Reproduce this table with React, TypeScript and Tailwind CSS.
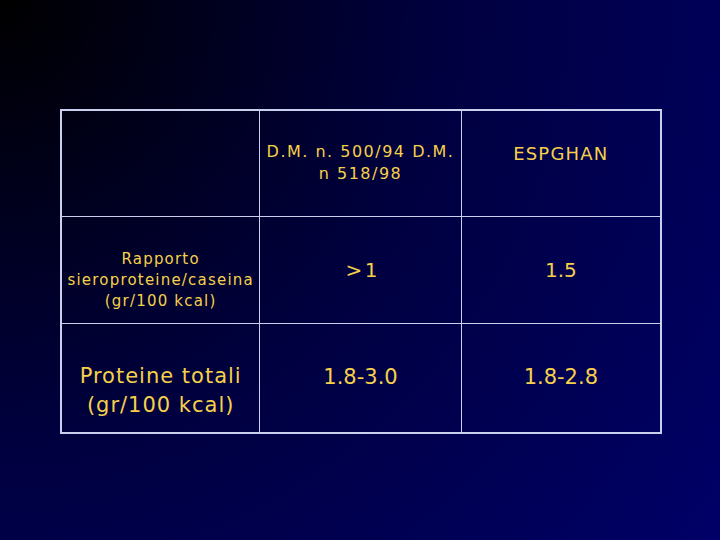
const font = { fontFamily: '"Comic Sans MS", "DejaVu Sans", "Noto Sans", sans-serif' };

const rows = [
  {
    h: "h-[106px]",
    cells: [
      { lines: [], cls: "" },
      { lines: ["D.M. n. 500/94 D.M.", "n 518/98"], cls: "text-[16px] leading-[22px] tracking-[1.5px] -mt-[2px]" },
      { lines: ["ESPGHAN"], cls: "text-[18px] leading-[22px] tracking-[1.2px] -mt-5" },
    ],
  },
  {
    h: "h-[107px]",
    cells: [
      { lines: ["Rapporto", "sieroproteine/caseina", "(gr/100 kcal)"], cls: "text-[15px] leading-[21px] tracking-[1.2px] mt-5" },
      { lines: ["> 1"], cls: "text-[20px] leading-[26px] tracking-[-2px]" },
      { lines: ["1.5"], cls: "text-[20px] leading-[26px]" },
    ],
  },
  {
    h: "h-[108px]",
    cells: [
      { lines: ["Proteine totali", "(gr/100 kcal)"], cls: "text-[21px] leading-[29px] tracking-[1px] mt-[26px]" },
      { lines: ["1.8-3.0"], cls: "text-[21px] leading-[26px] -mt-[2px]" },
      { lines: ["1.8-2.8"], cls: "text-[21px] leading-[26px] -mt-[2px]" },
    ],
  },
];

const widths = ["w-[199px]", "w-[202px]", "w-[199px]"];

export default function App() {
  return (
    <div
      className="w-[720px] h-[540px] overflow-hidden pt-[109px] pl-[60px] bg-[radial-gradient(circle_at_0_0,#000000_0px,#000040_450px,#000066_880px)]"
      style={font}
    >
      <div className="w-[602px] border-2 border-[#c9d0ee] flex flex-col">
        {rows.map((row, ri) => (
          <div
            key={ri}
            className={`flex ${row.h} ${ri < rows.length - 1 ? "border-b border-[#c9d0ee]" : ""}`}
          >
            {row.cells.map((c, ci) => (
              <div
                key={ci}
                className={`${widths[ci]} flex flex-col items-center justify-center text-center text-[#f6d04a] ${
                  ci < 2 ? "border-r border-[#c9d0ee]" : ""
                }`}
              >
                <div className={c.cls}>
                  {c.lines.map((l, li) => (
                    <div key={li} className="whitespace-nowrap">
                      {l}
                    </div>
                  ))}
                </div>
              </div>
            ))}
          </div>
        ))}
      </div>
    </div>
  );
}
